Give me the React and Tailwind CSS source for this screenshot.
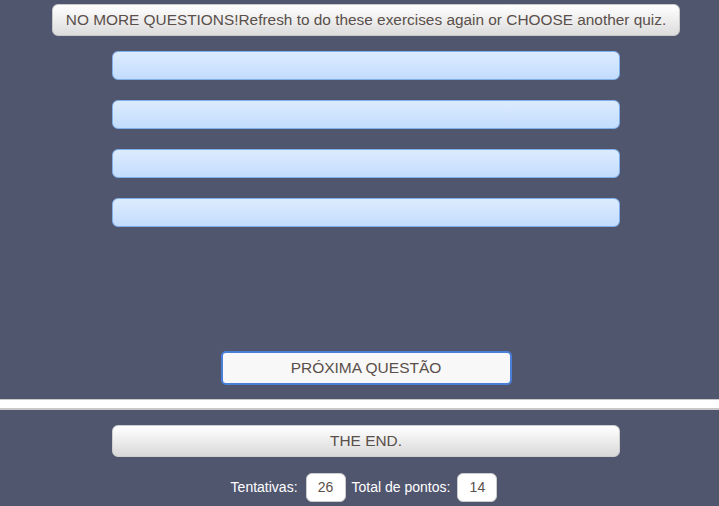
export default function App() {
  const answers = [0, 1, 2, 3];

  return (
    <div className="min-h-[506px] w-full bg-[#51566f] font-['Liberation_Sans',Arial,sans-serif]">
      <div className="pl-[13px] pt-1">
        <div className="mx-auto flex h-[32px] w-[628px] items-center justify-center rounded-[6px] border border-[#c9c9c9] bg-[linear-gradient(#ffffff,#dcdcdc)] text-[15.4px] text-[#5a4f4a]">
          NO MORE QUESTIONS!Refresh to do these exercises again or CHOOSE another quiz.
        </div>
      </div>

      <div className="mt-[15px] flex flex-col items-center gap-[20px] pl-[13px]">
        {answers.map((a) => (
          <div
            key={a}
            className="h-[29px] w-[508px] rounded-[6px] border border-[#7fb0ec] bg-[linear-gradient(#dcecfe,#c3dcfd)]"
          />
        ))}
      </div>

      <div className="mt-[124px] flex justify-center pl-[13px]">
        <button className="flex h-[34px] w-[291px] items-center justify-center rounded-[5px] border-2 border-[#4a7fd8] bg-[#f8f8f8] text-[15.5px] text-[#5a4f4a]">
          PRÓXIMA QUESTÃO
        </button>
      </div>

      <div className="mt-[14px] h-[11px] border-t border-b-2 border-[#c8c8c8] bg-white" />

      <div className="mt-[15px] flex justify-center pl-[13px]">
        <div className="flex h-[32px] w-[508px] items-center justify-center rounded-[6px] border border-[#cfcfcf] bg-[linear-gradient(#ffffff,#d9d9d9)] text-[15.4px] text-[#5a4f4a]">
          THE END.
        </div>
      </div>

      <div className="mt-[16px] flex items-center justify-center pl-[9px] text-[14px] text-white">
        <span>Tentativas:</span>
        <span className="ml-[8px] flex h-[29px] w-[40px] items-center justify-center rounded-[6px] border border-[#ccc] bg-white text-[#5a4f4a]">
          26
        </span>
        <span className="ml-[6px]">Total de pontos:</span>
        <span className="ml-[7px] flex h-[29px] w-[40px] items-center justify-center rounded-[6px] border border-[#ccc] bg-white text-[#5a4f4a]">
          14
        </span>
      </div>
    </div>
  );
}
